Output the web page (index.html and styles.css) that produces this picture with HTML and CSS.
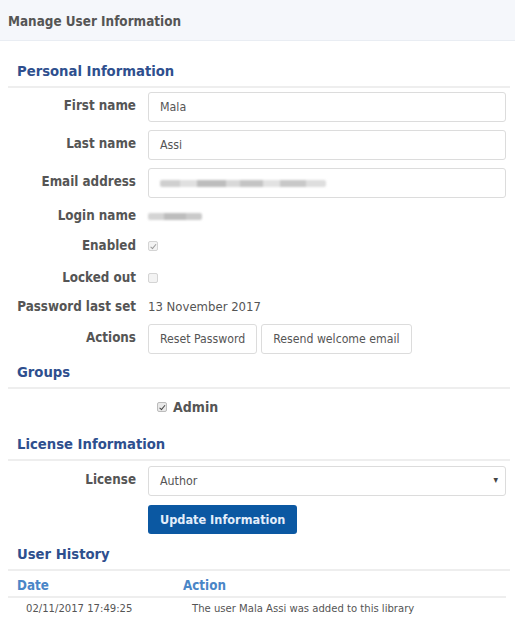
FILE: index.html
```html
<!DOCTYPE html>
<html>
<head>
<meta charset="utf-8">
<link rel="stylesheet" href="styles.css">
</head>
<body>
<div class="header">Manage User Information</div>
<div class="content">
  <h2 class="section-title">Personal Information</h2>
  <div class="form">
    <label class="label input-row">First name</label>
    <div class="field"><div class="input">Mala</div></div>
    <label class="label input-row">Last name</label>
    <div class="field"><div class="input">Assi</div></div>
    <label class="label input-row">Email address</label>
    <div class="field"><div class="input"><span class="blur blur-email"></span></div></div>
    <label class="label text-row">Login name</label>
    <div class="field text-row"><span class="blur blur-login"></span></div>
    <label class="label check-row">Enabled</label>
    <div class="field check-row"><span class="checkbox checked faint"></span></div>
    <label class="label check-row">Locked out</label>
    <div class="field check-row"><span class="checkbox"></span></div>
    <label class="label pw-row">Password last set</label>
    <div class="field pw-row value">13 November 2017</div>
    <label class="label input-row">Actions</label>
    <div class="field actions">
      <button class="btn">Reset Password</button>
      <button class="btn">Resend welcome email</button>
    </div>
  </div>

  <h2 class="section-title">Groups</h2>
  <div class="form groups">
    <div></div>
    <div class="field group-item"><span class="checkbox checked dark"></span><span class="group-name">Admin</span></div>
  </div>

  <h2 class="section-title">License Information</h2>
  <div class="form license">
    <label class="label input-row">License</label>
    <div class="field"><div class="input select">Author<span class="caret">&#9662;</span></div></div>
    <div></div>
    <div class="field"><button class="btn-primary">Update Information</button></div>
  </div>

  <h2 class="section-title">User History</h2>
  <table class="history">
    <thead>
      <tr><th class="col-date">Date</th><th>Action</th></tr>
    </thead>
    <tbody>
      <tr><td class="col-date">02/11/2017 17:49:25</td><td>The user Mala Assi was added to this library</td></tr>
    </tbody>
  </table>
</div>
</body>
</html>
```

FILE: styles.css
```css
* { box-sizing: border-box; }
html, body { margin: 0; padding: 0; background: #fff; }
body {
  font-family: "DejaVu Sans Condensed", "DejaVu Sans", sans-serif;
  font-size: 12px;
  color: #555;
  width: 515px;
}
.header {
  height: 41px;
  background: #f5f7fb;
  border-bottom: 1px solid #e9edf3;
  padding: 0 8px;
  line-height: 44px;
  font-weight: bold;
  font-size: 13.4px;
  color: #555;
}
.content { padding: 0 5px 0 8px; }
.section-title {
  margin: 0;
  padding: 0 9px 5px;
  line-height: 20px;
  font-size: 14.7px;
  font-weight: bold;
  color: #2e4f8e;
  border-bottom: 2px solid #eeeeee;
}
.content > .section-title:first-child { margin-top: 20px; }
.form {
  display: grid;
  grid-template-columns: 128px 1fr;
  column-gap: 12px;
  row-gap: 8px;
  margin: 4px 4px 8px 0;
}
.form + .section-title { margin-top: 8px; }
.label {
  text-align: right;
  font-weight: bold;
  color: #555;
  font-size: 13.3px;
  white-space: nowrap;
}
.input-row { line-height: 27px; }
.text-row { line-height: 20px; height: 20px; }
.check-row { line-height: 24px; height: 24px; }
.pw-row { line-height: 18px; height: 18px; }
.value { font-size: 13px; }
.field { display: flex; align-items: center; min-width: 0; }
.input {
  width: 100%;
  height: 30px;
  border: 1px solid #dcdcdc;
  border-radius: 3px;
  padding: 0 11px;
  display: flex;
  align-items: center;
  color: #555;
  font-size: 12.3px;
}
.blur {
  display: inline-block;
  height: 7px;
  border-radius: 2px;
  filter: blur(1px);
}
.blur-email {
  width: 166px;
  background: linear-gradient(90deg, #cfcfcf 0 12%, #e0e0e0 12% 22%, #bdbdbd 22% 40%, #d8d8d8 40% 48%, #c4c4c4 48% 62%, #e2e2e2 62% 72%, #c8c8c8 72% 88%, #dedede 88%);
}
.blur-login {
  width: 54px;
  background: linear-gradient(90deg, #d4d4d4 0 30%, #bdbdbd 30% 70%, #cacaca 70%);
}
.checkbox {
  display: inline-block;
  width: 10px;
  height: 10px;
  border: 1px solid #d4d4d4;
  border-radius: 2px;
  background: #f3f3f3;
  position: relative;
}
.checkbox.checked::after {
  content: "";
  position: absolute;
  left: 2.5px;
  top: 0.5px;
  width: 2px;
  height: 4.5px;
  border: solid #9a9a9a;
  border-width: 0 1.5px 1.5px 0;
  transform: rotate(40deg);
}
.checkbox.dark { border-color: #bcbcbc; background: #e9e9e9; }
.checkbox.dark::after { border-color: #444; }
.actions { gap: 4px; height: 30px; }
.btn {
  height: 30px;
  padding: 0 11px;
  border: 1px solid #dcdcdc;
  border-radius: 3px;
  background: #fff;
  color: #555;
  font-family: inherit;
  font-size: 12.2px;
}
.groups { margin-top: 8px; margin-bottom: 17px; }
.group-item { height: 20px; padding-left: 9px; }
.group-name { margin-left: 6px; font-weight: bold; font-size: 14px; color: #555; }
.license { margin-top: 5px; row-gap: 9px; }
.select { position: relative; }
.caret {
  position: absolute;
  right: 7px;
  top: 7px;
  font-size: 10px;
  color: #444;
}
.btn-primary {
  height: 29px;
  padding: 0 12px;
  border: none;
  border-radius: 3px;
  background: #0b58a2;
  color: #e4eefa;
  font-family: inherit;
  font-weight: bold;
  font-size: 12.6px;
}
.license + .section-title { margin-top: 10px; }
.history {
  width: 498px;
  border-collapse: collapse;
  margin-top: 5px;
}
.history th {
  text-align: left;
  color: #4a86c7;
  font-size: 13.3px;
  font-weight: bold;
  line-height: 20px;
  padding: 0 9px;
  border-bottom: 2px solid #eeeeee;
}
.history th.col-date { width: 166px; }
.history td {
  line-height: 22px;
  padding: 0 9px 0 18px;
  font-size: 11.2px;
  color: #555;
}
```
